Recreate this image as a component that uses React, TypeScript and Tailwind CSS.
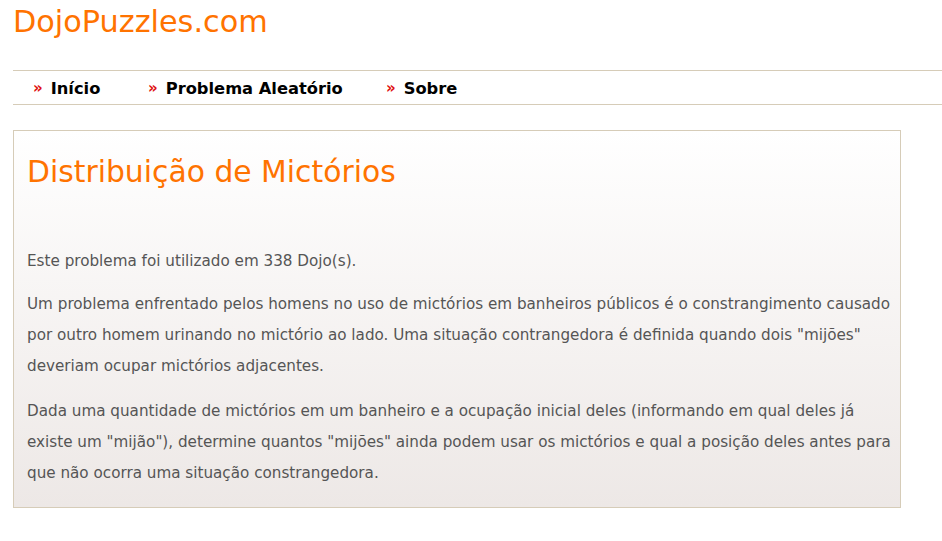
import React from "react";

const font = { fontFamily: '"DejaVu Sans", Verdana, sans-serif' };

export default function App() {
  const nav = ["Início", "Problema Aleatório", "Sobre"];
  return (
    <div className="min-h-[541px] bg-white" style={font}>
      <div className="pl-[13px]">
        <h1 className="pt-[2px] text-[30.3px] leading-[40px] text-[#ff7300]">DojoPuzzles.com</h1>
        <nav className="mt-[28px] flex h-[35px] items-center border-y border-[#d6ccb8] pl-[20px] pt-[3px]">
          {nav.map((n, i) => (
            <div key={n} className={`flex items-center ${i === 0 ? "w-[115px]" : i === 1 ? "w-[238px]" : ""}`}>
              <span className="mr-[8px] text-[15px] font-bold leading-none text-[#e01010]">»</span>
              <span className="text-[16.3px] font-bold leading-none text-black">{n}</span>
            </div>
          ))}
        </nav>
        <div className="mt-[25px] w-[888px] border border-[#d6ccb8] bg-gradient-to-b from-white to-[#ede8e6] pl-[13px] pr-[6px] pb-[18px] pt-[20px]">
          <h2 className="text-[29.8px] leading-[42px] text-[#ff7300]">Distribuição de Mictórios</h2>
          <div className="mt-[53px] text-[15.2px] leading-[31px] text-[#555555]">
            <p>Este problema foi utilizado em 338 Dojo(s).</p>
            <p className="mt-[12px]">
              Um problema enfrentado pelos homens no uso de mictórios em banheiros públicos é o constrangimento causado por outro homem urinando no mictório ao lado. Uma situação contrangedora é definida quando dois "mijões" deveriam ocupar mictórios adjacentes.
            </p>
            <p className="mt-[14px]">
              Dada uma quantidade de mictórios em um banheiro e a ocupação inicial deles (informando em qual deles já existe um "mijão"), determine quantos "mijões" ainda podem usar os mictórios e qual a posição deles antes para que não ocorra uma situação constrangedora.
            </p>
          </div>
        </div>
      </div>
    </div>
  );
}
